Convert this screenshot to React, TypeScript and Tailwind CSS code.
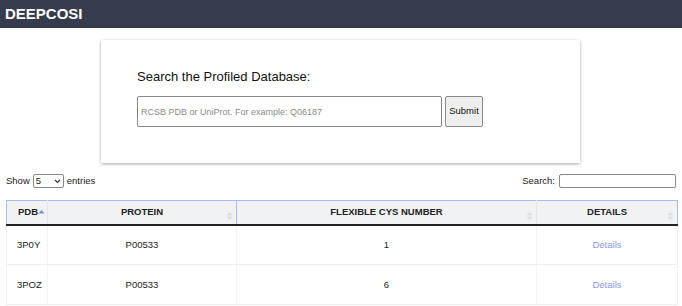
import React from "react";

function SortIcon({ active }: { active?: boolean }) {
  if (active) {
    return (
      <svg width="7" height="10" viewBox="0 0 7 10" className="inline-block">
        <path d="M0.5 4.5 L3.5 1 L6.5 4.5 Z" fill="#6b8fe8" />
      </svg>
    );
  }
  return (
    <svg width="7" height="10" viewBox="0 0 7 10" className="inline-block">
      <path d="M0.5 4.3 L3.5 1 L6.5 4.3 Z" fill="#dcdcdc" />
      <path d="M0.5 5.7 L3.5 9 L6.5 5.7 Z" fill="#dcdcdc" />
    </svg>
  );
}

export default function App() {
  const rows = [
    { pdb: "3P0Y", protein: "P00533", num: "1" },
    { pdb: "3POZ", protein: "P00533", num: "6" },
  ];
  return (
    <div className="w-[682px] h-[306px] overflow-hidden bg-white font-['Liberation_Sans',Arial,sans-serif] text-[#222]">
      <div className="h-[28px] bg-[#363c4d] flex items-center px-[5px]">
        <span className="text-white font-bold text-[15px]">DEEPCOSI</span>
      </div>
      <div className="flex justify-center pt-[12px]">
        <div className="w-[479px] h-[123px] bg-white shadow-[0_1px_3px_rgba(0,0,0,0.35)] pl-[36px] pt-[29px] ml-[-1px]">
          <div className="text-[13px] text-[#111] leading-[15px]">Search the Profiled Database:</div>
          <div className="flex mt-[12px] gap-[3px]">
            <input
              className="w-[305px] h-[31px] border border-[#888] rounded-[2px] px-[3px] text-[9px] outline-none placeholder:text-[#8a8a8a]"
              placeholder="RCSB PDB or UniProt. For example: Q06187"
            />
            <button className="w-[38px] h-[31px] border border-[#8a8a8a] rounded-[2px] bg-[#efefef] text-[9.5px] text-[#111]">
              Submit
            </button>
          </div>
        </div>
      </div>
      <div className="flex justify-between items-center px-[6px] mt-[11px] text-[9.5px] text-[#222]">
        <div className="flex items-center gap-[2px]">
          <span>Show</span>
          <div className="w-[31px] h-[14px] border border-[#888] rounded-[2px] flex items-center justify-between px-[2px] mx-[1px]">
            <span className="text-[9.5px]">5</span>
            <svg width="7" height="5" viewBox="0 0 7 5">
              <path d="M1 1 L3.5 3.5 L6 1" stroke="#333" strokeWidth="1.2" fill="none" />
            </svg>
          </div>
          <span>entries</span>
        </div>
        <div className="flex items-center gap-[4px]">
          <span>Search:</span>
          <div className="w-[117px] h-[14px] border border-[#888] rounded-[2px]" />
        </div>
      </div>
      <table className="ml-[6px] mt-[12px] w-[671px] border-collapse table-fixed text-[9.5px]">
        <colgroup>
          <col className="w-[41px]" />
          <col className="w-[189px]" />
          <col className="w-[300px]" />
          <col className="w-[141px]" />
        </colgroup>
        <thead>
          <tr className="h-[24px] bg-[#f1f2f4]">
            <th className="border-t border-t-[#a9bdf2] border-l border-l-[#a9bdf2] border-r border-r-[#e3e5ea] border-b-2 border-b-[#222] font-bold text-left pl-[11px] relative">
              PDB <span className="absolute top-[5px] right-[2px]"><SortIcon active /></span>
            </th>
            <th className="border-t border-t-[#a9bdf2] border-r border-r-[#a9bdf2] border-b-2 border-b-[#222] font-bold relative">
              PROTEIN<span className="absolute top-[7px] right-[3px]"><SortIcon /></span>
            </th>
            <th className="border-t border-t-[#a9bdf2] border-r border-r-[#e3e5ea] border-b-2 border-b-[#222] font-bold relative">
              FLEXIBLE CYS NUMBER<span className="absolute top-[7px] right-[3px]"><SortIcon /></span>
            </th>
            <th className="border-t border-t-[#a9bdf2] border-r border-r-[#a9bdf2] border-b-2 border-b-[#222] font-bold relative">
              DETAILS<span className="absolute top-[7px] right-[3px]"><SortIcon /></span>
            </th>
          </tr>
        </thead>
        <tbody>
          {rows.map((r) => (
            <tr key={r.pdb} className="h-[40px]">
              <td className="border-l border-l-[#f0f0f0] border-r border-r-[#f3f3f3] border-b border-b-[#efefef] pl-[10px]">{r.pdb}</td>
              <td className="border-r border-r-[#f3f3f3] border-b border-b-[#efefef] text-center">{r.protein}</td>
              <td className="border-r border-r-[#f3f3f3] border-b border-b-[#efefef] text-center">{r.num}</td>
              <td className="border-r border-r-[#f0f0f0] border-b border-b-[#efefef] text-center text-[#8899ee]">Details</td>
            </tr>
          ))}
        </tbody>
      </table>
    </div>
  );
}
